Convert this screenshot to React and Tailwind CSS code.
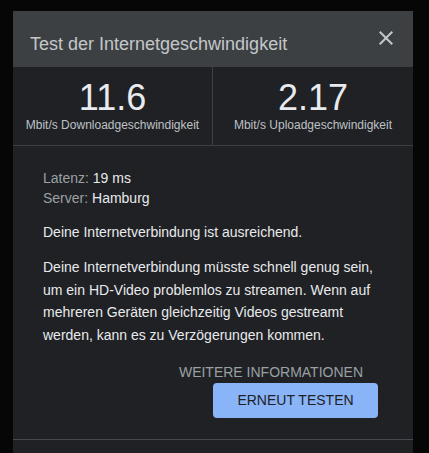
export default function App() {
  return (
    <div
      className="w-[429px] h-[453px] overflow-hidden bg-[#050605] pt-[11px] pl-[13px]"
      style={{ fontFamily: '"Liberation Sans", Arial, sans-serif' }}
    >
      <div className="w-[400px] bg-[#202124]">
        {/* Header */}
        <div className="relative h-[56px] bg-[#3c4043] pl-[17px] pt-[21px]">
          <div className="text-[18px] leading-[24px] text-[#c4c7c9]">
            Test der Internetgeschwindigkeit
          </div>
          <button className="absolute right-[15px] top-[15px] w-[24px] h-[24px] text-[#c4c7c9]">
            <svg viewBox="0 0 24 24" width="24" height="24" fill="currentColor">
              <path d="M19 6.41L17.59 5 12 10.59 6.41 5 5 6.41 10.59 12 5 17.59 6.41 19 12 13.41 17.59 19 19 17.59 13.41 12z" />
            </svg>
          </button>
        </div>

        {/* Stats */}
        <div className="grid grid-cols-2 border-b border-[#3c4043]">
          <div className="flex flex-col items-center pt-[13px] pb-[13px] border-r border-[#3c4043]">
            <div className="text-[36px] leading-[36px] text-[#e8eaed]">11.6</div>
            <div className="mt-[2px] text-[12px] leading-[14px] text-[#bdc1c6]">
              Mbit/s Downloadgeschwindigkeit
            </div>
          </div>
          <div className="flex flex-col items-center pt-[13px] pb-[13px]">
            <div className="text-[36px] leading-[36px] text-[#e8eaed]">2.17</div>
            <div className="mt-[2px] text-[12px] leading-[14px] text-[#bdc1c6]">
              Mbit/s Uploadgeschwindigkeit
            </div>
          </div>
        </div>

        {/* Body */}
        <div className="pt-[22px] pb-[21px] border-b border-[#46494d]">
          <div className="px-[30px] text-[14px]">
            <div className="leading-[20px] text-[#9aa0a6]">
              Latenz: <span className="text-[#e8eaed]">19 ms</span>
            </div>
            <div className="leading-[20px] text-[#9aa0a6]">
              Server: <span className="text-[#e8eaed]">Hamburg</span>
            </div>
            <p className="mt-[13px] leading-[22.5px] text-[#e8eaed]">
              Deine Internetverbindung ist ausreichend.
            </p>
            <p className="mt-[12.5px] leading-[22.5px] text-[#e8eaed]">
              Deine Internetverbindung müsste schnell genug sein, um ein HD-Video problemlos zu
              streamen. Wenn auf mehreren Geräten gleichzeitig Videos gestreamt werden, kann es zu
              Verzögerungen kommen.
            </p>
          </div>
          <div className="flex flex-col items-end pr-[35px] mt-[16px]">
            <div className="mr-[15px] text-[14px] leading-[20px] text-[#9aa0a6]">
              WEITERE INFORMATIONEN
            </div>
            <button className="mt-[1px] w-[165px] h-[35px] rounded-[4px] bg-[#8ab4f8] text-[14px] text-[#202124] flex items-center justify-center">
              ERNEUT TESTEN
            </button>
          </div>
        </div>
        <div className="h-[20px]" />
      </div>
    </div>
  );
}
